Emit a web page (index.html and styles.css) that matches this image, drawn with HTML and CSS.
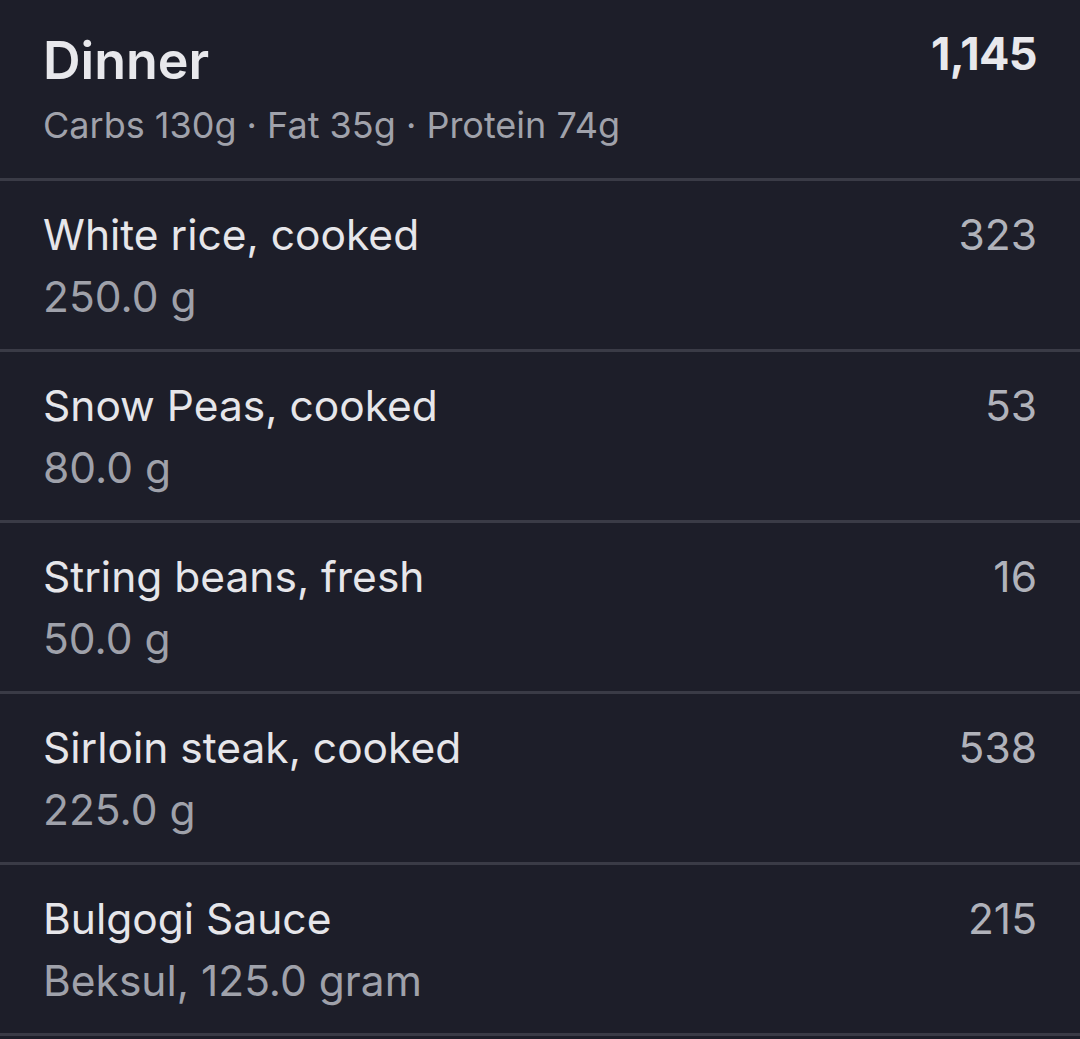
FILE: index.html
```html
<!DOCTYPE html>
<html>
<head>
<meta charset="utf-8">
<link rel="stylesheet" href="styles.css">
</head>
<body>
<div class="list">
  <div class="header">
    <div class="left">
      <div class="meal">Dinner</div>
      <div class="macros">Carbs 130g · Fat 35g · Protein 74g</div>
    </div>
    <div class="total">1,145</div>
  </div>
  <div class="row">
    <div class="left">
      <div class="name">White rice, cooked</div>
      <div class="amount">250.0 g</div>
    </div>
    <div class="cal">323</div>
  </div>
  <div class="row">
    <div class="left">
      <div class="name">Snow Peas, cooked</div>
      <div class="amount">80.0 g</div>
    </div>
    <div class="cal">53</div>
  </div>
  <div class="row">
    <div class="left">
      <div class="name">String beans, fresh</div>
      <div class="amount">50.0 g</div>
    </div>
    <div class="cal">16</div>
  </div>
  <div class="row">
    <div class="left">
      <div class="name">Sirloin steak, cooked</div>
      <div class="amount">225.0 g</div>
    </div>
    <div class="cal">538</div>
  </div>
  <div class="row">
    <div class="left">
      <div class="name">Bulgogi Sauce</div>
      <div class="amount">Beksul, 125.0 gram</div>
    </div>
    <div class="cal">215</div>
  </div>
</div>
</body>
</html>
```

FILE: styles.css
```css
html, body {
  margin: 0;
  padding: 0;
  background: #1d1e29;
}
body {
  font-family: Inter, "Noto Sans", sans-serif;
  width: 1080px;
  height: 1039px;
  overflow: hidden;
}
.list {
  display: flex;
  flex-direction: column;
}
.header, .row {
  display: flex;
  justify-content: space-between;
  align-items: flex-start;
  padding: 0 43px 0 43px;
  border-bottom: 3px solid #3a3b46;
  box-sizing: border-box;
}
.header {
  height: 181px;
  padding-top: 29px;
}
.row {
  height: 171px;
  padding-top: 26px;
}
.meal {
  font-size: 52px;
  font-weight: 600;
  color: #e8e8ec;
  line-height: 64px;
}
.macros {
  font-size: 36px;
  color: #a0a2ab;
  line-height: 44px;
  margin-top: 10px;
}
.total {
  font-size: 45px;
  font-weight: 700;
  letter-spacing: -0.6px;
  color: #e8e8ec;
  line-height: 50px;
}
.name {
  font-size: 42.5px;
  color: #e6e6ea;
  line-height: 56px;
}
.amount {
  font-size: 42.5px;
  color: #9fa1aa;
  line-height: 56px;
  margin-top: 6px;
}
.cal {
  font-size: 42.5px;
  color: #b0b2ba;
  line-height: 56px;
}
```
